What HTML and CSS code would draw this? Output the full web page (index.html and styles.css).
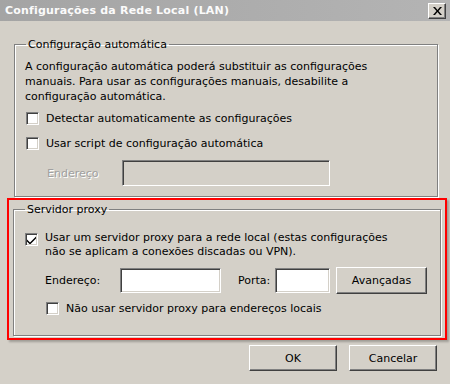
FILE: index.html
```html
<!DOCTYPE html>
<html lang="pt-BR">
<head>
  <meta charset="UTF-8">
  <title>Configurações da Rede Local (LAN)</title>
  <link rel="stylesheet" href="styles.css">
</head>
<body>
<div class="dialog">
  <div class="titlebar">
    <span class="title">Configurações da Rede Local (LAN)</span>
    <button class="close" aria-label="Fechar">
      <svg width="9" height="8" viewBox="0 0 9 8"><path d="M0 0h2l2.5 3 2.5-3h2l-3.5 4 3.5 4h-2l-2.5-3-2.5 3h-2l3.5-4z" fill="#000"/></svg>
    </button>
  </div>

  <div class="content">
    <fieldset class="group auto">
      <legend>Configuração automática</legend>
      <p class="desc">A configuração automática poderá substituir as configurações manuais. Para usar as configurações manuais, desabilite a configuração automática.</p>
      <label class="check first"><span class="box"></span>Detectar automaticamente as configurações</label>
      <label class="check"><span class="box"></span>Usar script de configuração automática</label>
      <div class="field-row script-row">
        <span class="disabled">Endereço</span>
        <span class="input wide off"></span>
      </div>
    </fieldset>

    <div class="highlight">
      <fieldset class="group proxy">
        <legend>Servidor proxy</legend>
        <label class="check multi"><span class="box checked"><svg width="9" height="8" viewBox="0 0 9 8"><path d="M0 3.5l3 3 6-6v2l-6 6-3-3z" fill="#000"/></svg></span><span class="wrap">Usar um servidor proxy para a rede local (estas configurações não se aplicam a conexões discadas ou VPN).</span></label>
        <div class="field-row proxy-row">
          <span class="lbl">Endereço:</span>
          <span class="input addr"></span>
          <span class="lbl port-lbl">Porta:</span>
          <span class="input port"></span>
          <button class="btn adv">Avançadas</button>
        </div>
        <label class="check bypass"><span class="box"></span>Não usar servidor proxy para endereços locais</label>
      </fieldset>
    </div>

    <div class="actions">
      <button class="btn">OK</button>
      <button class="btn">Cancelar</button>
    </div>
  </div>
</div>
</body>
</html>
```

FILE: styles.css
```css
body {
  margin: 0;
  background-color: #d4d0c8;
  font-family: 'DejaVu Sans', Verdana, sans-serif;
  font-size: 11px;
  color: #000;
}

.dialog {
  width: 450px;
  height: 384px;
  overflow: hidden;
}

.titlebar {
  height: 21px;
  background: linear-gradient(to right, #a4a4a4, #b4b4b4);
  display: flex;
  align-items: center;
  justify-content: space-between;
  padding: 0 4px 0 5px;
}

.title {
  color: #fbfbfb;
  font-weight: bold;
  font-size: 11px;
  letter-spacing: 0.2px;
}

.close {
  width: 18px;
  height: 16px;
  padding: 0;
  background: #d4d0c8;
  border: 1px solid;
  border-color: #fff #404040 #404040 #fff;
  box-shadow: inset -1px -1px #808080;
  display: flex;
  align-items: center;
  justify-content: center;
}

.content {
  padding: 16px 6px 0 8px;
}

.group {
  margin: 0 6px;
  border: 1px solid #808080;
  box-shadow: inset 1px 1px #fff, 1px 1px #fff;
  padding: 7px 10px 10px 10px;
}

.group legend {
  padding: 0 2px;
  margin-left: 1px;
  line-height: 15px;
}

.desc {
  margin: 0;
  line-height: 15px;
  max-width: 365px;
}

.check {
  display: flex;
  align-items: center;
  gap: 7px;
  line-height: 15px;
  margin-top: 10px;
  padding-left: 1px;
}

.check.first {
  margin-top: 7px;
}

.box {
  flex: none;
  width: 11px;
  height: 11px;
  background: #fff;
  border: 1px solid;
  border-color: #808080 #fff #fff #808080;
  box-shadow: inset 1px 1px #404040, inset -1px -1px #d4d0c8;
  display: flex;
  align-items: center;
  justify-content: center;
}

.check.multi {
  align-items: flex-start;
  margin-top: 8px;
  line-height: 14px;
}

.check.multi .box {
  margin-top: 2px;
}

.wrap {
  max-width: 365px;
}

.field-row {
  display: flex;
  align-items: center;
}

.script-row {
  margin-top: 9px;
  padding-left: 22px;
}

.disabled {
  color: #a0a0a0;
  text-shadow: 1px 1px #fff;
  width: 75px;
}

.input {
  display: block;
  flex: none;
  background: #fff;
  border: 1px solid;
  border-color: #808080 #fff #fff #808080;
  box-shadow: inset 1px 1px #404040, inset -1px -1px #d4d0c8;
}

.input.off {
  background: #d4d0c8;
}

.wide {
  width: 206px;
  height: 24px;
}

.highlight {
  margin: 1px -3px 0 -1px;
  border: 2px solid #f00;
  padding: 2px 4px 2px 4px;
  box-shadow: 2px 2px 2px rgba(0, 0, 0, 0.25);
}

.group.proxy {
  margin: 0;
  padding-top: 6px;
  padding-bottom: 19px;
}

.proxy-row {
  margin-top: 8px;
  padding-left: 21px;
}

.lbl {
  flex: none;
  width: 75px;
}

.addr {
  width: 99px;
  height: 23px;
}

.port-lbl {
  width: 37px;
  margin-left: 17px;
}

.port {
  width: 53px;
  height: 23px;
}

.btn {
  font-family: 'DejaVu Sans', Verdana, sans-serif;
  font-size: 11px;
  color: #000;
  background: #d4d0c8;
  border: 1px solid;
  border-color: #fff #404040 #404040 #fff;
  box-shadow: inset -1px -1px #808080;
  padding: 0;
}

.adv {
  width: 91px;
  height: 27px;
  margin-left: 6px;
}

.check.bypass {
  margin-top: 7px;
  padding-left: 22px;
}

.actions {
  display: flex;
  justify-content: flex-end;
  gap: 12px;
  margin-top: 5px;
  padding-right: 7px;
}

.actions .btn {
  width: 88px;
  height: 26px;
}
```
